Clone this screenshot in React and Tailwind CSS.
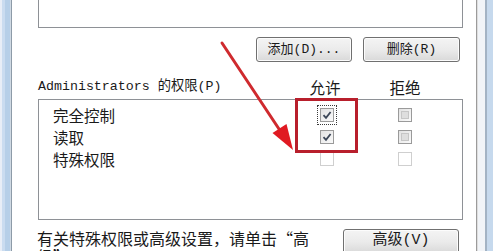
import React from 'react';

const cjk = { fontFamily: '"Noto Sans CJK SC", "Noto Sans", sans-serif' };
const mono = { fontFamily: '"Liberation Mono", "Noto Sans CJK SC", monospace' };

const CheckBox = ({ checked, dim, focus }) => {
  const box = (
    <span
      className={`flex h-[14px] w-[14px] items-center justify-center border ${
        dim ? 'border-[#cfcfcf] bg-white' : 'border-[#9a9a9a] bg-gradient-to-br from-[#e2e2e2] to-[#fafafa]'
      }`}
    >
      {checked ? (
        <svg width="10" height="10" viewBox="0 0 10 10">
          <path d="M1.5 5.2 L4 7.8 L8.6 2" fill="none" stroke="#3b4657" strokeWidth="1.8" />
        </svg>
      ) : !dim ? (
        <span className="h-[8px] w-[8px] border border-[#c6c6c6] bg-[#dedede]" />
      ) : null}
    </span>
  );
  if (focus) {
    return <span className="flex border border-dotted border-[#3a3a3a] p-[2px]">{box}</span>;
  }
  return box;
};

const Button = ({ children, className }) => (
  <div
    className={`flex h-[25px] items-center justify-center rounded-[3px] border border-[#707070] bg-gradient-to-b from-[#f4f4f4] via-[#ebebeb] to-[#d9d9d9] text-[13px] text-[#1a1a1a] shadow-[inset_0_0_0_1px_#fcfcfc] ${className}`}
    style={mono}
  >
    {children}
  </div>
);

const rows = [
  { label: '完全控制', allow: true, deny: false, focus: true },
  { label: '读取', allow: true, deny: false },
  { label: '特殊权限', allow: false, deny: false, dim: true },
];

export default function App() {
  return (
    <div className="relative flex h-[251px] w-[493px] overflow-hidden bg-white">
      {/* left window frame */}
      <div className="flex h-full shrink-0">
        <div className="w-[2px] bg-[#e8eef7]" />
        <div className="w-[3px] bg-[#cadcf0]" />
        <div className="w-[5px] bg-[#b6cfe8]" />
        <div className="w-[1px] bg-[#cfd9e3]" />
        <div className="w-[1px] bg-[#8d9ba8]" />
      </div>

      {/* dialog page */}
      <div className="flex min-w-0 flex-1 flex-col pl-[26px] pr-[13px] text-[#1a1a1a]">
        <div className="h-[28px] shrink-0 border-x border-b border-[#8e9196] bg-white" />

        <div className="mt-[9px] flex justify-end gap-[11px] pr-[3px]">
          <Button className="w-[96px]">添加(D)...</Button>
          <Button className="w-[97px]">删除(R)</Button>
        </div>

        <div className="mt-[15px] flex h-[20px] items-center leading-[20px]">
          <div className="w-[267px] text-[13.3px]" style={mono}>
            Administrators 的权限(P)
          </div>
          <div className="w-[40px] text-center text-[15.5px]" style={cjk}>允许</div>
          <div className="ml-[40px] w-[40px] text-center text-[15.5px]" style={cjk}>拒绝</div>
        </div>

        <div className="mt-[2px] h-[121px] shrink-0 border border-[#8e9196] bg-white pt-[4px]">
          {rows.map((r) => (
            <div key={r.label} className="flex h-[22px] items-center">
              <div className="w-[268px] pl-[14px] text-[15.5px] leading-[22px]" style={cjk}>
                {r.label}
              </div>
              <div className="flex w-[40px] justify-center">
                <CheckBox checked={r.allow} dim={r.dim} focus={r.focus} />
              </div>
              <div className="ml-[38px] flex w-[40px] justify-center">
                <CheckBox checked={r.deny} dim={r.dim} />
              </div>
            </div>
          ))}
        </div>

        <div className="mt-[9px] flex items-start justify-between pr-[4px]">
          <div className="-ml-[1px] w-[280px] text-[16px] leading-[18px]" style={cjk}>
            有关特殊权限或高级设置，请单击“高级”。
          </div>
          <Button className="w-[116px] text-[15px]">高级(V)</Button>
        </div>
      </div>

      {/* right window frame */}
      <div className="flex h-full shrink-0">
        <div className="w-[1px] bg-[#9b9b9b]" />
        <div className="w-[1px] bg-[#dedede]" />
        <div className="w-[7px] bg-[#f1f4f8]" />
        <div className="w-[2px] bg-[#a3b3c4]" />
        <div className="w-[6px] bg-[#c6d9ed]" />
      </div>

      {/* annotation: red highlight box */}
      <div className="absolute left-[295px] top-[98px] h-[55px] w-[63px] border-[3px] border-[#b81f2c]" />

      {/* annotation: red arrow */}
      <svg className="pointer-events-none absolute left-0 top-0" width="493" height="251" viewBox="0 0 493 251">
        <line x1="222" y1="43" x2="281" y2="132" stroke="#cf2a2e" strokeWidth="3" strokeLinecap="round" />
        <polygon points="293,150 272.5,133 286.5,124" fill="#e01a22" />
      </svg>
    </div>
  );
}
